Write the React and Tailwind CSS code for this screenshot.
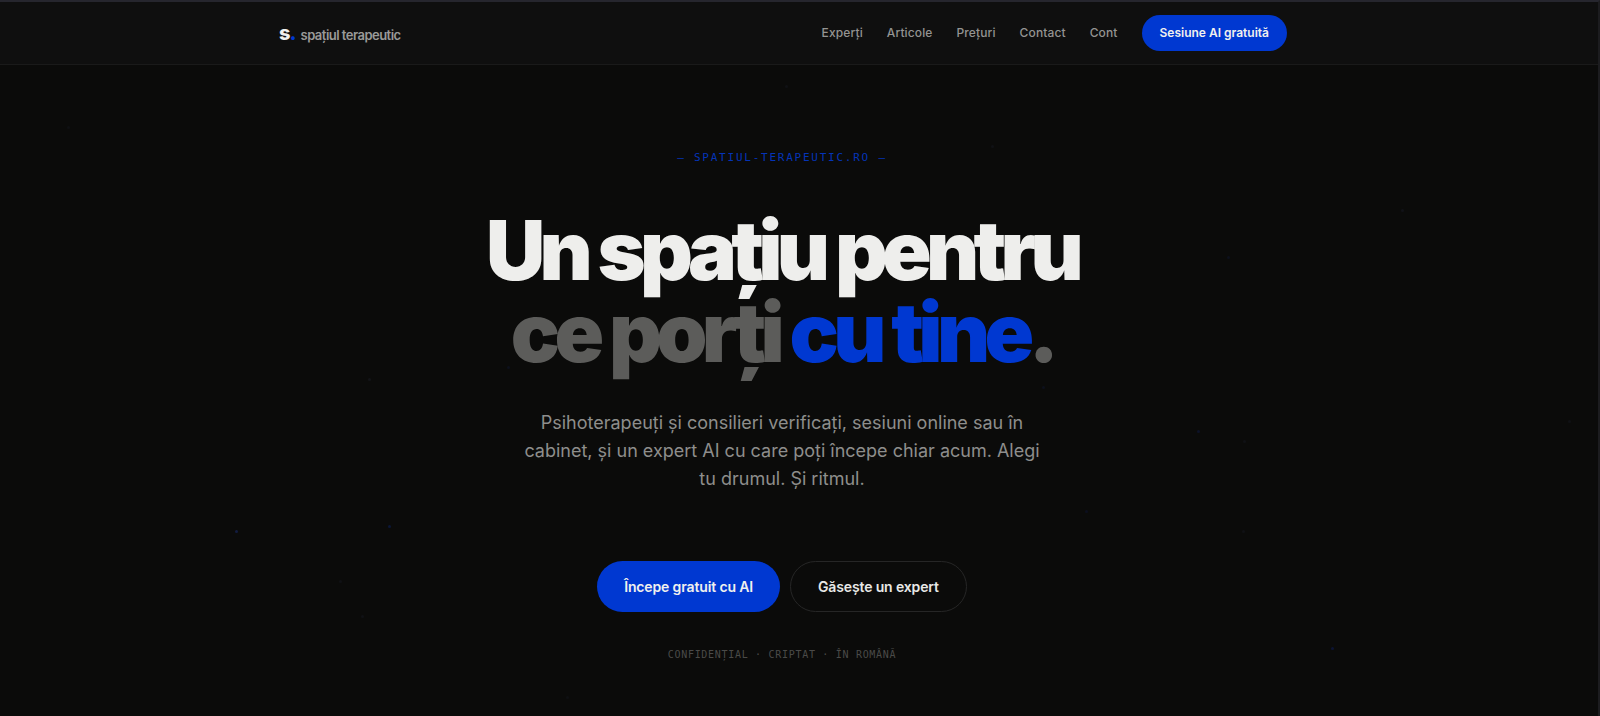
import React from "react";

const navLinks = [
  { label: "Experți", href: "#experti" },
  { label: "Articole", href: "#articole" },
  { label: "Prețuri", href: "#preturi" },
  { label: "Contact", href: "#contact" },
  { label: "Cont", href: "#cont" },
];

// x / y in percent of the page
const particles = [
  { x: 14.7, y: 74, color: "#121c40" },
  { x: 24.3, y: 73.2, color: "#0b1738" },
  { x: 21.2, y: 81, color: "#101115" },
  { x: 22.6, y: 85.8, color: "#101115" },
  { x: 23, y: 52.7, color: "#131418" },
  { x: 31.7, y: 51, color: "#0d101c" },
  { x: 49.1, y: 11.6, color: "#101115" },
  { x: 62, y: 20, color: "#101115" },
  { x: 65.2, y: 53.8, color: "#0d101c" },
  { x: 67.9, y: 71.1, color: "#0c0f1e" },
  { x: 74.9, y: 59.9, color: "#0d1228" },
  { x: 77.8, y: 61.4, color: "#101115" },
  { x: 77.7, y: 74, color: "#101115" },
  { x: 76.8, y: 35.6, color: "#0d101c" },
  { x: 87.7, y: 29, color: "#111218" },
  { x: 83.3, y: 90.3, color: "#0c1434" },
  { x: 98.1, y: 58.6, color: "#101115" },
  { x: 35.4, y: 97.2, color: "#0f1013" },
  { x: 4.2, y: 17.3, color: "#0f1013" },
];

const Header = () => {
  return (
    <header className="border-b border-[#1a1a1a] bg-[#0f0f0f] pr-8">
      <div className="mx-auto flex h-[62px] max-w-[1008px] items-center justify-between">
        <a href="#top" className="flex items-baseline gap-[5px] pt-0.5">
          <span className="text-xl leading-5 font-extrabold tracking-tighter text-[#f0f0ee]">
            s<span className="text-[#0038d1]">.</span>
          </span>
          <span className="text-[13px] leading-5 font-semibold tracking-[-0.04em] text-[#9a9a98]">
            spațiul terapeutic
          </span>
        </a>

        <nav className="flex items-center gap-6">
          {navLinks.map((link) => (
            <a
              key={link.href}
              href={link.href}
              className="text-xs font-medium tracking-[0.01em] text-[#949492]"
            >
              {link.label}
            </a>
          ))}
          <button className="h-9 rounded-full bg-[#0038d1] px-[18px] text-xs font-semibold text-[#f0f0ee]">
            Sesiune AI gratuită
          </button>
        </nav>
      </div>
    </header>
  );
};

const Hero = () => {
  return (
    <main className="flex flex-col items-center pt-[83px] pr-[34px] pb-10 text-center">
      <p className="font-['DejaVu_Sans_Mono',monospace] text-[11px] leading-5 tracking-[0.16em] text-[#0434b8]">
        — SPATIUL-TERAPEUTIC.RO —
      </p>

      <h1 className="mt-[42px] text-[82px] leading-[82px] font-black tracking-[-0.07em] text-[#eeeeec]">
        Un spațiu pentru
        <br />
        <span className="text-[#5c5c5a]">
          ce porți <span className="text-[#0038d1]">cu tine</span>.
        </span>
      </h1>

      <p className="mt-[35px] max-w-[530px] text-lg leading-7 text-[#8e8e8c]">
        Psihoterapeuți și consilieri verificați, sesiuni online sau în cabinet, și un
        expert AI cu care poți începe chiar acum. Alegi tu drumul. Și ritmul.
      </p>

      <div className="mt-[68px] flex gap-[10px]">
        <button className="h-[51px] rounded-full bg-[#0038d1] px-[27px] text-sm font-semibold tracking-[-0.01em] text-[#f0f0ee]">
          Începe gratuit cu AI
        </button>
        <button className="h-[51px] rounded-full border border-[#262626] px-[27px] text-sm font-semibold tracking-[-0.01em] text-[#e8e8e6]">
          Găsește un expert
        </button>
      </div>

      <p className="mt-[33px] font-['DejaVu_Sans_Mono',monospace] text-[10px] leading-5 tracking-[0.07em] text-[#4a4a48]">
        CONFIDENȚIAL · CRIPTAT · ÎN ROMÂNĂ
      </p>
    </main>
  );
};

const App = () => {
  return (
    <div
      id="top"
      className="relative min-h-screen border-t-2 border-r-2 border-t-[#26262e] border-r-[#1c1c1f] bg-[#0b0b0a] font-['Inter',sans-serif] antialiased"
    >
      {particles.map((p, idx) => (
        <span
          key={idx}
          className="absolute size-[3px] rounded-full"
          style={{ left: `${p.x}%`, top: `${p.y}%`, backgroundColor: p.color }}
        />
      ))}
      <Header />
      <Hero />
    </div>
  );
};

export default App;
